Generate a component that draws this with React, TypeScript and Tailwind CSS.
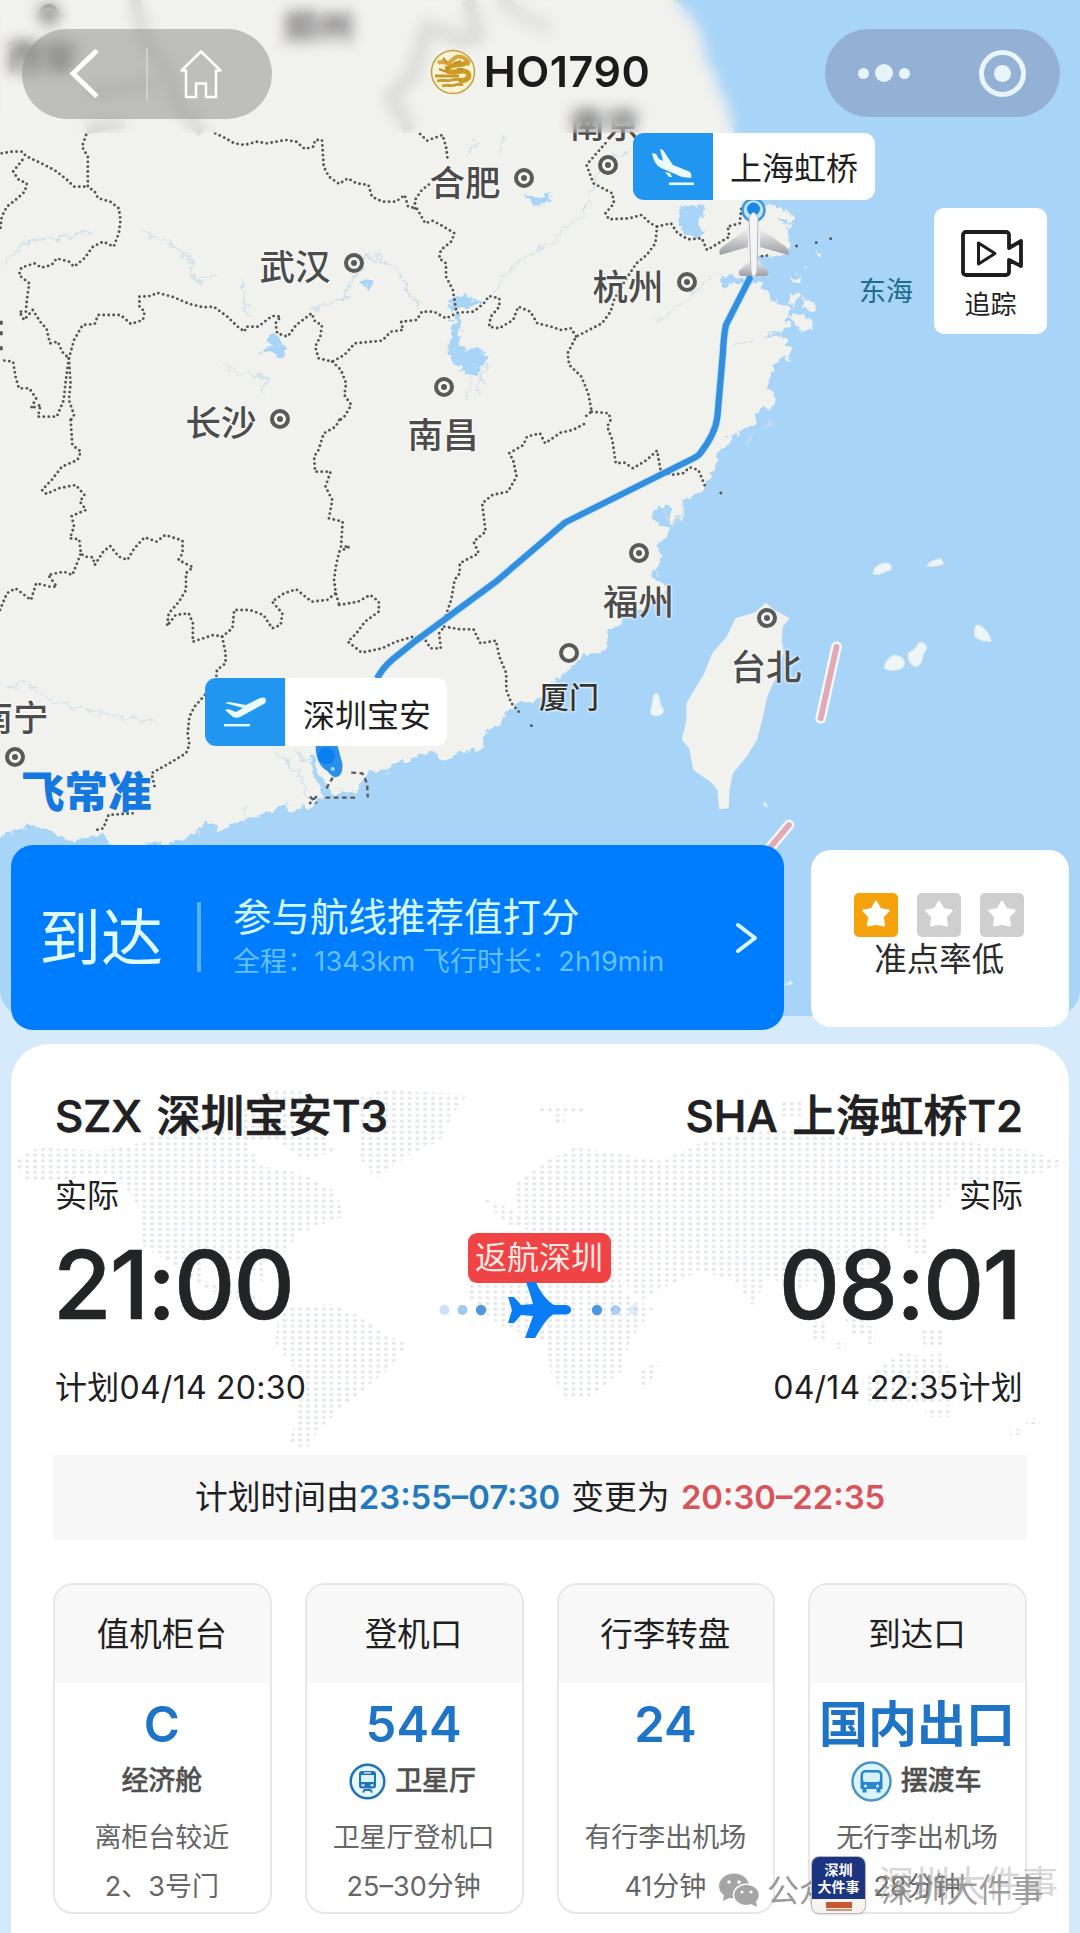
import clsx from 'clsx';

type City = {
  name: string;
  x: number;
  y: number;
  dot: [number, number];
  small?: boolean;
};

const cities: City[] = [
  { name: '西安', x: 42, y: 57, dot: [49, 14] },
  { name: '郑州', x: 318, y: 27, dot: [300, -30] },
  { name: '南京', x: 605, y: 125, dot: [608, 165] },
  { name: '合肥', x: 465, y: 183, dot: [524, 178] },
  { name: '武汉', x: 295, y: 267, dot: [354, 263] },
  { name: '长沙', x: 221, y: 423, dot: [279.5, 418.5] },
  { name: '南昌', x: 443, y: 435, dot: [444, 387] },
  { name: '杭州', x: 628, y: 287, dot: [687, 282] },
  { name: '福州', x: 638.5, y: 602, dot: [639, 553] },
  { name: '厦门', x: 569, y: 696.5, dot: [569, 653], small: true },
  { name: '台北', x: 766, y: 666.5, dot: [766.5, 618] },
  { name: '南宁', x: 13, y: 717.5, dot: [15, 757] },
];

type InfoCard = {
  title: string;
  value: string;
  tag?: string;
  icon?: 'train' | 'bus';
  lines: [string, string];
};

const infoCards: InfoCard[] = [
  { title: '值机柜台', value: 'C', tag: '经济舱', lines: ['离柜台较近', '2、3号门'] },
  { title: '登机口', value: '544', tag: '卫星厅', icon: 'train', lines: ['卫星厅登机口', '25–30分钟'] },
  { title: '行李转盘', value: '24', lines: ['有行李出机场', '41分钟'] },
  { title: '到达口', value: '国内出口', tag: '摆渡车', icon: 'bus', lines: ['无行李出机场', '28分钟'] },
];

// Province borders, upper half then lower half of the sheet
const bordersTop = [
  '5,460 35,455 65,455 75,468 95,478 130,495 165,515 195,540 215,560 250,560',
  '250,405 238,440 255,470 255,560 275,575 285,595 320,605 345,625 350,660 345,700 330,740 300,725 270,740 245,775 215,800 200,785 165,775 150,795 120,803 100,790 62,803 55,825 85,850 78,900 75,935 56,935 70,960 95,930 120,970 135,985 145,1030 168,1025 180,1055 200,1075',
  '65,480 38,515 55,540 78,550 72,575 45,600 20,620 5,650 0,695',
  '200,1075 190,1150 185,1200 165,1250 110,1250 118,1215 90,1225 105,1195 85,1165 55,1165 45,1130 38,1085 0,1080',
  '200,1075 205,1150 200,1200 215,1245 205,1262',
  '200,1075 215,1020 240,975 275,972 285,945 350,945 380,972 415,960 420,935 405,920 405,890 440,888 455,878 500,890 550,912 590,922 620,920 660,950 690,980 710,995 715,980 750,980 790,948 815,950 800,970 805,1000 835,1010 860,975 905,940 915,965 935,975 930,1010 915,1040 925,1075 965,1085 1000,1065 1030,1030 1110,1022 1135,995 1170,990 1165,965 1210,960 1225,935 1260,935 1295,955 1330,938 1375,935 1405,910 1420,888 1450,895 1450,920 1425,950 1420,980 1450,985 1490,960 1505,920 1540,935 1560,970 1600,980 1628,990 1658,985 1673,1010',
  '625,400 650,412 680,430 710,435 745,425 775,430 830,420 860,425 885,447 910,440 915,420 935,420 940,500 955,530 985,552 1010,535 1035,550 1070,555 1080,590 1110,605 1150,605 1175,585 1185,620 1210,625 1235,670 1255,662 1280,675 1320,700 1310,725 1280,750 1275,775 1295,790 1295,830 1315,870 1325,935',
  '1205,625 1205,600 1225,570 1250,550',
  '1220,402 1240,422 1285,405 1295,440 1300,480',
  '965,1085 990,1110 1005,1150 1000,1185 1020,1215 1000,1250 985,1262',
  '1758,430 1728,465 1703,495 1723,550 1778,580 1783,610 1758,640 1768,658 1828,655 1863,645 1888,670 1908,680 1903,730 1878,765 1848,790 1813,845 1783,900 1773,935 1748,970 1673,1010 1648,1060 1653,1095 1688,1130 1708,1180 1718,1235 1693,1255',
  '1718,1235 1768,1240 1773,1260 1763,1280 1778,1320 1788,1390 1813,1388 1838,1405 1878,1380 1908,1352 1918,1410 1948,1425 1983,1420 2003,1402 2028,1410 2048,1460',
  '1908,680 1948,670 1968,700 1998,718 2038,715 2053,750 2118,710 2113,680 2148,670 2153,620',
  '2198,770 2218,768 2240,765',
];

const bordersBottom = [
  '205,0 210,75 235,95 225,120 180,140 150,180 122,210 135,222 170,205 220,195 245,225 232,245 250,270 208,288 215,320 203,355 230,358 235,400 245,410 270,412 275,435 300,395 320,378 345,410 370,420 390,385 420,352 455,365 480,345 530,362 530,400 518,420 560,442 540,460 540,510 520,545 490,580 485,618 510,585 548,580 560,610 560,665 590,655 620,645 645,650',
  '985,0 975,20 940,40 925,90 912,110 915,155 960,155 945,200 965,240 955,295 995,305 990,380 1015,380 985,395 975,440 970,480 975,520 985,555',
  '0,570 20,520 45,505 90,540 105,490 145,500 165,500 140,465 185,455 210,465 235,400',
  '645,650 675,625 680,570 725,570 765,585 790,625 815,615 820,580 790,545 825,520 860,508 905,545 950,540 975,520',
  '985,555 1040,545 1075,525 1100,545 1100,575 1060,605 1035,640 1010,665 1050,698 1110,685 1150,665 1200,650 1235,660 1250,685 1280,685 1275,640 1290,620',
  '1290,620 1335,628 1375,628 1395,670 1440,662 1450,710 1470,760 1470,810 1485,850 1515,885',
  '1290,600 1310,540 1320,480 1335,460 1335,430 1390,400 1375,365 1410,335 1400,250 1430,225 1475,215 1500,170 1490,120 1478,100 1520,75 1530,50 1568,40 1583,70 1628,38 1663,30 1700,10',
  '645,650 655,700 655,730 630,750 628,770',
  '595,825 565,860 550,890 545,940 550,975 540,1000 495,1028 440,1060 450,1105',
  '385,1180 315,1185 300,1225 280,1230',
];

const route =
  'M2182,825 L2108,975 Q2101,1010 2099,1060 L2083,1250 Q2078,1300 2033,1360 Q2025,1370 2000,1382 L1640,1568 L1568,1632 L1440,1745 L1200,1928 L1140,1978 Q1112,2002 1095,2035';

function MapSheet() {
  return (
    <svg className="absolute inset-0 h-[1023px] w-full" viewBox="0 0 1080 1023" aria-hidden="true">
      <defs>
        <filter id="coast" x="-2%" y="-2%" width="104%" height="104%">
          <feTurbulence type="fractalNoise" baseFrequency="0.035" numOctaves="4" seed="7" />
          <feDisplacementMap in="SourceGraphic" scale="42" xChannelSelector="R" yChannelSelector="G" />
        </filter>
        <linearGradient id="wing" x1="0" y1="0" x2="0" y2="1">
          <stop offset="0" stopColor="#f4f4f6" />
          <stop offset="1" stopColor="#9b9da3" />
        </linearGradient>
      </defs>
      <rect width="1080" height="1023" fill="#a8d4f7" />

      <g transform="scale(.34439 .33333)">
        <g filter="url(#coast)" fill="#f1f1ee">
          {/* Mainland */}
          <path d="M-60,-60 H1958 L1965,0 L2028,80 L2058,200 L2098,280 L2128,370 L2140,470 L2200,590 L2250,640 L2285,690 L2292,745 L2260,765 L2205,768 L2190,800 L2150,835 L2088,820 L2105,860 L2150,850 L2205,845 L2240,890 L2262,910 L2295,925 L2285,985 L2215,1010 L2275,1000 L2298,1060 L2260,1085 L2228,1160 L2242,1215 L2200,1245 L2180,1275 L2120,1310 L2083,1360 L2068,1425 L2030,1475 L1990,1505 L1965,1520 L1903,1520 L1900,1560 L1945,1605 L1912,1625 L1918,1690 L1898,1735 L1945,1760 L1870,1825 L1808,1860 L1765,1895 L1755,1950 L1700,1960 L1668,2000 L1625,2035 L1590,2070 L1560,2100 L1510,2110 L1470,2130 L1450,2180 L1410,2185 L1405,2240 L1330,2262 L1290,2280 L1260,2250 L1170,2285 L1120,2310 L1060,2320 L1040,2375 L960,2380 L945,2350 L905,2260 L900,2300 L940,2390 L915,2410 L860,2435 L830,2410 L790,2435 L710,2460 L640,2490 L600,2462 L550,2510 L480,2535 L310,2540 L295,2495 L240,2520 L190,2525 L170,2500 L90,2475 L40,2500 L-60,2530 Z" />
          <path d="M2290,885 l25,-8 12,22 -30,14z M2330,895 l35,5 -6,38 -36,-8z M2295,940 l40,4 28,22 -22,26 -38,-12z" />
          <path d="M2225,610 l85,30 -10,30 -60,-30z M2255,655 l48,24 -10,10z" />
          <path d="M2300,830 h22 v14 h-22z M2330,800 h14 v10 h-14z M2372,755 h12 v14 h-12z M2270,1040 l40,10 -20,40z M2225,1170 l24,14 -12,40z" />
          <path d="M1950,1520 l40,-10 -12,52 -30,10z M1910,1590 l30,0 -8,26z M2115,1290 l50,-20 -20,45z" />
        </g>
        {/* Taiwan */}
        <path
          fill="#f1f1ee"
          d="M2223,1808 l25,22 45,25 -20,25 -3,45 6,30 -18,65 -30,70 -15,70 -15,60 -30,50 -40,50 -10,50 -2,55 -28,3 -5,-58 -20,-25 -50,-35 -12,-65 -21,-25 13,-60 0,-50 52,-90 23,-60 42,-50 25,-55 58,-18z"
        />
        <g fill="#eef5f6" stroke="#d6e8f0" strokeWidth="3">
          <path d="M2535,1722 q2,-30 38,-34 q20,4 14,22 q-22,6 -34,14z" />
          <path d="M2690,1698 q14,-18 34,-20 l8,-4 8,18 q-20,10 -50,6z" />
          <path d="M2567,2003 q6,-30 30,-38 q28,2 30,26 q-4,18 -28,20 q-24,2 -32,-8z M2637,1958 q16,-6 24,-16 q6,-20 18,-14 q22,10 2,34 q-4,34 -20,38 q-26,-4 -24,-42z" />
          <path d="M2830,1912 v-28 q4,-14 18,-6 q28,20 30,46 q-20,4 -46,-12z" />
          <path d="M1898,2085 q10,-12 16,6 l4,24 q18,20 0,30 q-22,8 -30,-8 q6,-24 10,-52z" />
          <path d="M2218,2406 l10,8 -2,8 -8,-8z M2278,2955 l18,-12 4,8z" />
        </g>
        {/* Lakes and rivers */}
        <g filter="url(#coast)" fill="#a8d4f7">
          <path d="M1310,900 l50,-15 45,20 -40,20 -55,10z M1322,950 h18 l-8,90 50,5 34,18 -24,62 -35,0 -45,-40 -12,-50z" />
          <path d="M790,1000 l35,10 0,60 -25,-5 -40,-15 25,-15z M1058,840 l25,10 -10,25 -18,-10z" />
          <path d="M1520,570 l40,25 50,-15 -15,25 -40,15z M1975,620 q40,-20 65,10 q-20,50 15,75 q-40,20 -75,-10 q-18,-40 -5,-75z" />
        </g>
        <g fill="none" stroke="#c6dce8" strokeWidth="5" strokeOpacity=".8" filter="url(#coast)">
          <path d="M10,800 L65,735 120,715 200,712 280,695 M400,695 450,710 500,735 545,775 575,845 630,825 M700,850 720,950 M900,930 L1000,890 1030,830 1060,770 1120,780 1170,840 1220,930" />
          <path d="M1440,880 L1460,820 1540,760 1600,730 1640,680 1700,640 1720,560 1760,470 1830,455 M780,1130 l-20,60 M640,1100 l150,40 M1360,460 l20,-35 M1445,460 l20,-50 M1910,960 l100,-70 60,-60" strokeWidth="4" />
          <path d="M10,2070 l60,-25 70,50 120,40 200,30 M1370,1130 l-20,70 M1410,1090 l-20,90" strokeWidth="4" />
          <path d="M800,2250 l60,60 40,80 M850,2240 l50,60 30,60 M710,2410 v60 M2130,1040 l60,-30" strokeWidth="5" />
          <path d="M1920,1530 l40,50 30,-70 M2200,1290 l-30,40 M2230,1260 l-10,30" strokeWidth="7" />
        </g>

        <g fill="none" stroke="#7a7a78" strokeOpacity=".3" strokeWidth="38" strokeLinejoin="round">
          <polyline points="390,-10 420,120 480,200 520,320 590,395" strokeOpacity=".2" />
          <polyline points="250,280 450,250" strokeOpacity=".2" />
          <polyline points="250,385 290,375 360,365" strokeOpacity=".2" />
          <polyline points="1190,390 1135,290 1200,220 1240,80 1340,120 1390,110 1360,0" strokeOpacity=".2" />
          <polyline points="1450,0 1520,50 1600,90" strokeOpacity=".15" />
        </g>
        <g fill="none" stroke="#555" strokeWidth="8.500" strokeLinecap="round" strokeDasharray="0 14.5">
          {bordersTop.map((points) => (
            <polyline key={points} points={points} />
          ))}
          <g transform="translate(0 1260)">
            {bordersBottom.map((points) => (
              <polyline key={points} points={points} />
            ))}
          </g>
          <path d="M2313,738 h1 M2370,728 h1 M2412,716 l14,-3 M2093,1479 h1 M1543,2177 h1" />
        </g>
        <path d="M0,968 h8 M0,1000 h8 M0,1045 h8" stroke="#555" strokeWidth="12" />
        <path
          d="M1020,2318 l32,2 14,30 2,42 M945,2393 h90 M948,2365 l18,-32 M900,2390 l20,20 M920,2388 l-22,24"
          fill="none"
          stroke="#5c5c5c"
          strokeWidth="7"
          strokeDasharray="14 10"
        />

        {/* Maritime dashes */}
        <g strokeLinecap="round" fill="none">
          <path d="M2429,1940 L2383,2155 M2291,2475 L2190,2600" stroke="#f4f8fb" strokeWidth="31" />
          <path d="M2429,1940 L2383,2155 M2291,2475 L2190,2600" stroke="#e2aab6" strokeWidth="17" />
        </g>

        {/* Flown route */}
        <path d={route} fill="none" stroke="#8fd8ff" strokeWidth="23" strokeOpacity=".6" />
        <path d={route} fill="none" stroke="#348ede" strokeWidth="18" />

        {/* Departure pin */}
        <path d="M917,2230 q-4,60 34,84 q14,18 24,18 q22,-4 19,-42 q-8,-30 -16,-60z" fill="#2a8fea" />
        <circle cx="948" cy="2268" r="25" fill="#0a80f0" />
        <circle cx="966" cy="2307" r="6" fill="#9fe0ff" />
      </g>

      {/* Arrival dot and aircraft */}
      <circle cx="753.5" cy="210" r="11" fill="#bfe6ff" stroke="#3d96e2" strokeWidth="2.5" />
      <circle cx="753.5" cy="209" r="6.5" fill="#1c86e6" />
      <path d="M748 228 L722 247 Q718 251 720 255 L748 247Z M760 228 L786 247 Q790 251 788 255 L760 247Z" fill="url(#wing)" />
      <path d="M750 260 L739 271 Q738 275 741 276 L766 276 Q770 274 768 271 L758 260Z" fill="url(#wing)" />
      <path d="M749 218 Q753.500 207 758 218 L757 272 L753.500 279 L751 272Z" fill="#f5f5f7" stroke="#b7b9bf" strokeWidth="1" />
    </svg>
  );
}

function CityMarker({ city }: { city: City }) {
  return (
    <>
      <span
        className="absolute flex h-[20px] w-[20px] -translate-x-1/2 -translate-y-1/2 items-center justify-center rounded-full border-[4px] border-[#5a5a5a] bg-[#f6f6f4]"
        style={{ left: city.dot[0], top: city.dot[1] }}
      >
        {!city.small && <i className="h-[6px] w-[6px] rounded-full bg-[#5a5a5a]" />}
      </span>
      <span
        className={clsx(
          'absolute -translate-x-1/2 -translate-y-1/2 font-medium whitespace-nowrap [text-shadow:0_0_3px_#fff,0_0_3px_#fff]',
          city.small ? 'text-[30px] leading-[30px] text-[#333]' : 'text-[35.500px] leading-[35px] text-[#4c4c4c]',
        )}
        style={{ left: city.x, top: city.y }}
      >
        {city.name}
      </span>
    </>
  );
}

function LandingIcon() {
  return (
    <svg className="h-[38px] w-[44px]" viewBox="0 0 44 38" fill="#eafaff">
      <path d="M9 1l3 1 10 15 15 6c3 1 4 4 3 7l-9-1L10 20C5 17 3 14 1 5l4 1 3 5 4 2z" />
      <path d="M14 24l5 1 2 4h-3z" />
      <rect x="18" y="34.500" width="25" height="2.600" />
    </svg>
  );
}

function TakeoffIcon() {
  return (
    <svg className="h-[32px] w-[44px]" viewBox="0 0 44 32" fill="#eafaff">
      <path d="M2 7l4-1 17 3L37 2c3-1 6-1 6 2 0 2-1 4-4 5L17 21c-2 1-5 1-7 0L2 14l3-1 8 3 7-4z" />
      <rect x="1" y="28" width="26" height="2.400" />
    </svg>
  );
}

function AirportTag({ name, landing }: { name: string; landing?: boolean }) {
  return (
    <div className="flex h-full w-[242px] overflow-hidden rounded-[11px] bg-white">
      <div className="flex w-[80px] items-center justify-center bg-[#2196f0]">
        {landing ? <LandingIcon /> : <TakeoffIcon />}
      </div>
      <div className={clsx('flex flex-1 items-center justify-center text-[32px] text-[#1f1f1f]', landing ? 'pt-[4px]' : 'pt-[8px] pl-[2px]')}>
        {name}
      </div>
    </div>
  );
}

function AirlineLogo() {
  return (
    <svg className="h-[46px] w-[46px]" viewBox="0 0 46 46" fill="none">
      <circle cx="23" cy="23" r="21.500" fill="#fbf3d6" stroke="#c2a040" strokeWidth="1.500" />
      <path d="M8 14c6-3 8 2 12-1s6-7 12-5c5 2 8 5 5 8" stroke="#d6a63c" strokeWidth="4" />
      <path d="M37 13c-4 4-11 2-16 4s-5 6 1 6 13-3 16 1-2 9-9 7" stroke="#cf9a24" strokeWidth="5" />
      <path d="M5 27h24M7 32c7-2 10 1 15-1s9 1 13-1M12 37c5-2 9 1 13-1s5 1 8-1" stroke="#c9982a" strokeWidth="2.800" />
      <path d="M9 20l8 3M13 9l4 5M24 14l7-2M15 18l5 2M27 20h6" stroke="#c08f24" strokeWidth="2.200" />
    </svg>
  );
}

function TopBar() {
  return (
    <header className="relative flex h-[133px] items-start justify-between px-[22px] pt-[29px] backdrop-blur-[7px]">
      <div className="flex h-[90px] w-[250px] items-center rounded-full bg-[#8c8c8a]/50">
        <svg className="ml-[46px] h-[52px] w-[34px]" viewBox="0 0 34 52" fill="none">
          <path d="M29 2.500L5 25.500L29 48.500" stroke="#fff" strokeWidth="5" />
        </svg>
        <i className="ml-[44px] h-[52px] w-[2px] bg-white/30" />
        <svg className="ml-[30px] h-[52px] w-[46px]" viewBox="0 0 46 52" fill="none">
          <path
            d="M23 3.500L3.500 22.500H8V49H18V35.500H28V49H38V22.500H42.500Z"
            stroke="#fff"
            strokeWidth="2.500"
            strokeLinejoin="round"
          />
        </svg>
      </div>
      <div className="mt-[20px] ml-[-17px] flex items-center gap-[8px]">
        <AirlineLogo />
        <h1 className="-mt-[3px] text-[43px] leading-[46px] font-semibold tracking-[0.500px] text-[#1c1a1a]">HO1790</h1>
      </div>
      <div className="mr-[-2px] flex h-[88px] w-[235px] items-center rounded-full bg-[#7f93b8]/55">
        <div className="ml-[33px] flex items-center gap-[6px]">
          <i className="h-[11px] w-[11px] rounded-full bg-[#e6f3fb]" />
          <i className="h-[18px] w-[18px] rounded-full bg-[#e6f3fb]" />
          <i className="h-[11px] w-[11px] rounded-full bg-[#e6f3fb]" />
        </div>
        <div className="ml-[69px] flex h-[47px] w-[47px] items-center justify-center rounded-full border-[5px] border-[#e9f5fd]">
          <i className="h-[17px] w-[17px] rounded-full bg-[#e9f5fd]" />
        </div>
      </div>
    </header>
  );
}

function FlightMap() {
  return (
    <section className="relative h-[1016px] overflow-hidden rounded-b-[26px]">
      <MapSheet />
      {cities.map((city) => (
        <CityMarker key={city.name} city={city} />
      ))}
      <span className="absolute top-[278px] left-[859px] text-[27px] leading-[27px] text-[#1d6c8c]">东海</span>
      <span className="absolute top-[770px] left-[21px] text-[43.500px] leading-[44px] font-black text-[#1478e0]">
        飞常准
      </span>
      <TopBar />
      <div className="absolute top-[133px] left-[633px] h-[67px]">
        <AirportTag name="上海虹桥" landing />
      </div>
      <div className="absolute top-[678px] left-[205px] h-[68px]">
        <AirportTag name="深圳宝安" />
      </div>
      <button className="absolute top-[208px] left-[934px] flex h-[126px] w-[113px] flex-col items-center rounded-[10px] bg-white pt-[22px]">
        <svg className="ml-[3px] h-[47px] w-[62px]" viewBox="0 0 62 47" fill="none" stroke="#1d1d1d" strokeWidth="3.800">
          <path
            d="M48 15V5a3 3 0 0 0-3-3H5a3 3 0 0 0-3 3V42a3 3 0 0 0 3 3H45a3 3 0 0 0 3-3V30L60 36V11L48 18Z"
            strokeLinejoin="round"
          />
          <path d="M17.500 13V34L34 23.500Z" strokeWidth="3" strokeLinejoin="round" />
        </svg>
        <span className="mt-[14px] text-[26px] leading-[28px] text-[#222]">追踪</span>
      </button>
    </section>
  );
}

function RatingStar({ active }: { active?: boolean }) {
  return (
    <span
      className={clsx('flex h-[43.500px] w-[44px] items-center justify-center rounded-[5px]', active ? 'bg-[#f5a20c]' : 'bg-[#cfcfcf]')}
    >
      <svg className="-mt-[1px] h-[32px] w-[32px]" viewBox="0 0 30 30">
        <path
          d="M15 3.500l3.800 6.900 7.900 1.400-5.500 5.800 1.100 8L15 23.900l-7.300 1.700 1.100-8-5.500-5.800 7.900-1.400z"
          fill="#fff"
          stroke="#fff"
          strokeWidth="2.200"
          strokeLinejoin="round"
        />
      </svg>
    </span>
  );
}

function StatusRow() {
  return (
    <div className="relative -mt-[171px] flex items-start justify-between px-[11px]">
      <div className="flex h-[184.500px] w-[772.500px] items-center rounded-[22px] bg-[#007dff] pl-[28px]">
        <span className="pt-[3px] text-[62px] leading-[64px] font-normal text-[#dffcff]">到达</span>
        <i className="ml-[34px] h-[70px] w-[4px] bg-[#55b0ff]" />
        <div className="ml-[32px] flex flex-col pt-[4px]">
          <span className="text-[38.500px] leading-[46px] text-[#d3fbff]">参与航线推荐值打分</span>
          <span className="text-[27px] leading-[44px] tracking-[0.100px] whitespace-nowrap text-[#66c0ff]">
            全程：1343km 飞行时长：2h19min
          </span>
        </div>
        <svg className="mt-[2px] mr-[25px] ml-auto h-[32px] w-[24px]" viewBox="0 0 24 32" fill="none">
          <path d="M3 3L20 16L3 29" stroke="#d8fbff" strokeWidth="4" strokeLinecap="round" strokeLinejoin="round" />
        </svg>
      </div>
      <div className="mt-[5px] flex h-[177px] w-[258.500px] flex-col items-center rounded-[20px] bg-white pt-[43px] pr-[1px]">
        <div className="flex gap-[19px]">
          <RatingStar active />
          <RatingStar />
          <RatingStar />
        </div>
        <span className="mt-[4px] text-[32.500px] leading-[38px] text-[#2b2b2b]">准点率低</span>
      </div>
    </div>
  );
}

function WorldDots() {
  return (
    <svg className="absolute top-0 left-0 h-[430px] w-[1058px]" viewBox="11 1043 1058 430" aria-hidden="true">
      <defs>
        <pattern id="dots" width="7.800" height="5.700" patternUnits="userSpaceOnUse">
          <ellipse cx="3.900" cy="2.850" rx="2.200" ry="1.600" fill="#e3e7ec" />
        </pattern>
      </defs>
      <g fill="url(#dots)">
        {/* Americas */}
        <path d="M14 1160L40 1145 100 1150 150 1140 245 1140 262 1165 300 1172 335 1190 345 1215 300 1232 285 1250 262 1262 268 1285 240 1262 205 1258 200 1278 225 1285 262 1298 255 1305 205 1288 170 1262 143 1245 140 1210 125 1185 105 1172 60 1180 25 1178Z" />
        <path d="M265 1090L310 1088 300 1105 335 1150 305 1160 275 1140 145 1138 200 1118 240 1108Z" />
        <path d="M355 1096L385 1089 468 1093 452 1115 440 1140 412 1152 375 1178 356 1152 362 1128Z" />
        <path d="M290 1305L330 1303 362 1316 382 1332 408 1342 392 1365 366 1387 340 1408 318 1430 305 1450 290 1440 300 1400 300 1375 275 1342 278 1318Z" />
        {/* Europe and Asia */}
        <path d="M480 1197L500 1202 520 1215 512 1185 545 1160 575 1146 618 1152 660 1160 700 1142 745 1132 800 1126 870 1138 960 1140 1030 1150 1068 1162 1040 1172 1005 1178 960 1182 935 1215 915 1238 890 1232 885 1265 830 1275 792 1292 770 1275 752 1305 735 1280 700 1270 668 1285 640 1300 615 1270 600 1240 555 1235 510 1225Z" />
        <path d="M540 1104h45v8h-20v10h-10v-10h-15zM780 1100h25v15h-25z" />
        {/* Africa, Oceania */}
        <path d="M490 1248L560 1240 610 1262 632 1300 655 1305 630 1340 622 1370 590 1398 566 1398 550 1370 546 1340 500 1325 465 1295 470 1268ZM642 1368l18-8-12 28-8-2z" />
        <path d="M862 1378L900 1352 925 1355 940 1352 956 1380 950 1405 900 1400 868 1404ZM925 1408h28v8h-28zM1026 1417h14v6h-14zM1010 1428h10v6h-10z" />
        <path d="M810 1320h15v18h-12zM832 1342h14v6h-14zM845 1318h20v16h-14zM862 1325h14v18h-8zM918 1330h24v14h-18zM900 1236h30v18h-14z" />
      </g>
    </svg>
  );
}

function TimeColumn({ code, airport, time, plan, right }: { code: string; airport: string; time: string; plan: string; right?: boolean }) {
  return (
    <div className={clsx('flex flex-col whitespace-nowrap text-[#202022]', right ? 'items-end' : 'items-start')}>
      <h2 className="text-[43.800px] leading-[44px] font-medium [word-spacing:3px] [-webkit-text-stroke:0.7px_#202022]">
        {code} {airport}
      </h2>
      <span className="mt-[37px] text-[32px] leading-[40px]">实际</span>
      <span
        className={clsx(
          'mt-[21px] text-[95px] leading-[96px] font-medium tracking-[-1.900px] text-[#222426] [-webkit-text-stroke:0.6px_#222426]',
          right ? 'mr-[3px]' : '-ml-[2px]',
        )}
      >
        {time}
      </span>
      <span className="mt-[35px] text-[32px] leading-[40px] tracking-[0.250px]">{plan}</span>
    </div>
  );
}

function FlightTrack() {
  return (
    <div className="flex flex-col items-center pt-[138px]">
      <span className="flex h-[50px] w-[143px] items-center justify-center rounded-[9px] bg-[#f04346] text-[32px] whitespace-nowrap text-[#ffe8e2]">
        返航深圳
      </span>
      <svg className="-mt-[1px] h-[56px] w-[200px]" viewBox="440 1281 200 56">
        <g fill="#2f86d8">
          <circle cx="445.500" cy="1309" r="5" opacity=".25" />
          <circle cx="463.500" cy="1309" r="5" opacity=".45" />
          <circle cx="482" cy="1309" r="5.200" opacity=".85" />
          <circle cx="598" cy="1309" r="5.200" opacity=".85" />
          <circle cx="616.500" cy="1309" r="5" opacity=".4" />
          <circle cx="634.500" cy="1309" r="5" opacity=".15" />
        </g>
        <path
          transform="translate(508 1281)"
          d="M19 0h10c3 8 10 18 18 23h11c4 0 6 2.500 6 5s-2 4.500-6 4.500H46C38 38 33 48 28 56H18c3-8 6-16 8-22l-12-1-7 8H1l4-13L1 15h6l7 8 12-1c-2-7-4-14-7-22z"
          fill="#0a7cf5"
        />
      </svg>
    </div>
  );
}

function TransitIcon({ kind }: { kind: 'train' | 'bus' }) {
  if (kind === 'train') {
    return (
      <svg className="-ml-[2px] h-[37px] w-[37px]" viewBox="0 0 37 37" fill="none">
        <circle cx="18.500" cy="18.500" r="16.800" fill="#e6f8ff" stroke="#1f72b4" strokeWidth="2.500" />
        <rect x="10" y="8" width="17" height="17.500" rx="3" fill="#2272b8" />
        <rect x="12" y="12" width="13" height="7" fill="#d8f3ff" />
        <rect x="15" y="9.200" width="7" height="1.300" fill="#d8f3ff" />
        <path d="M12.500 22.300h3M21.500 22.300h3" stroke="#d8f3ff" strokeWidth="2" />
        <path d="M14 29.500l1.500-2.500h6l1.500 2.500" stroke="#2272b8" strokeWidth="1.800" />
      </svg>
    );
  }
  return (
    <svg className="-ml-[2px] h-[41px] w-[41px]" viewBox="0 0 41 41" fill="none">
      <circle cx="20.500" cy="20.500" r="19" fill="#d9f4ff" stroke="#4b93c4" strokeWidth="2.500" />
      <path d="M9.500 14a5 5 0 0 1 5-5h12a5 5 0 0 1 5 5v14h-2v3.500h-4v-3.500h-10v3.500h-4v-3.500h-2z" fill="#2c86cc" />
      <rect x="12" y="11.500" width="17" height="9.500" rx="2.500" fill="#d3f2ff" />
      <circle cx="14.500" cy="25" r="1.500" fill="#d3f2ff" />
      <circle cx="26.500" cy="25" r="1.500" fill="#d3f2ff" />
    </svg>
  );
}

function InfoTile({ card }: { card: InfoCard }) {
  return (
    <div className="flex h-[331px] flex-col items-center overflow-hidden rounded-[20px] border-[2.500px] border-[#e7e7e7] bg-white pr-[1px] whitespace-nowrap">
      <div className="-mr-[1px] flex h-[99px] w-[215px] items-center justify-center bg-[#f8f8f8] pt-[2px] pr-[1px] text-[32.500px] leading-[40px] text-[#1f1f1f]">
        {card.title}
      </div>
      <span className="mt-[12px] text-[49px] leading-[60px] font-semibold text-[#1f74c6]">{card.value}</span>
      <div className="mt-[6px] flex h-[40px] items-center gap-[9px] text-[27px] font-medium text-[#4f4f4f] [-webkit-text-stroke:0.4px_#4f4f4f]">
        {card.icon && <TransitIcon kind={card.icon} />}
        {card.tag}
      </div>
      <p className="mt-[11.500px] text-center text-[27px] leading-[49.500px] text-[#666]">
        {card.lines[0]}
        <br />
        {card.lines[1]}
      </p>
    </div>
  );
}

function Watermark() {
  return (
    <div className="absolute top-[1856px] left-[719px] h-[62px] w-[350px] whitespace-nowrap">
      <svg className="absolute top-[17px] left-0 h-[34px] w-[42px]" viewBox="0 0 42 34">
        <ellipse cx="15" cy="13" rx="15" ry="12.500" fill="#a5a5a5" />
        <path d="M5 21l-1 7 8-4z" fill="#a5a5a5" />
        <ellipse cx="27.500" cy="22" rx="13" ry="10.800" fill="#a5a5a5" stroke="#fff" strokeWidth="1.500" />
        <path d="M32 31l6 3-1-6z" fill="#a5a5a5" />
        <g fill="#fff">
          <circle cx="10" cy="9" r="1.800" />
          <circle cx="20" cy="9" r="1.800" />
          <circle cx="23" cy="19" r="1.600" />
          <circle cx="32" cy="19" r="1.600" />
        </g>
      </svg>
      <span className="absolute top-[17px] left-[48px] text-[32px] leading-[36px] text-[#8c8c8c]/90">公众号</span>
      <span className="absolute top-[10px] left-[159px] text-[36px] leading-[36px] text-[#b0b0b0]/50">深圳大件事</span>
      <span className="absolute top-[17px] left-[153px] text-[32.500px] leading-[36px] text-[#8c8c8c]/85">
        <span className="inline-block w-[9px] tracking-[-4px]">·</span>深圳大件事
      </span>
      <div className="absolute top-0 left-[92px] flex h-[58px] w-[55px] flex-col items-center overflow-hidden rounded-[8px] border border-[#b9b9b9] bg-[#f6f3f0] shadow-sm">
        <div className="flex h-[42px] w-full flex-col items-center justify-center bg-[#1d3580] text-[14px] leading-[17px] font-bold text-white">
          <span>深圳</span>
          <span>大件事</span>
        </div>
        <i className="mt-[3px] h-[6px] w-[26px] bg-[#c8562f]" />
        <i className="mt-px h-[2px] w-[26px] bg-[#d9927a]" />
      </div>
    </div>
  );
}

export default function App() {
  return (
    <div className="relative h-[1933px] w-[1080px] overflow-hidden bg-gradient-to-b from-[#d9ecfc] to-[#d2e8fb] font-[Inter,'Noto_Sans_CJK_SC',sans-serif]">
      <FlightMap />
      <StatusRow />
      <main className="relative mx-[11px] mt-[14px] h-[890px] rounded-t-[38px] bg-white pt-[51px]">
        <WorldDots />
        <div className="relative grid grid-cols-[1fr_200px_1fr] pr-[46px] pl-[44px]">
          <TimeColumn code="SZX" airport="深圳宝安T3" time="21:00" plan="计划04/14 20:30" />
          <FlightTrack />
          <TimeColumn code="SHA" airport="上海虹桥T2" time="08:01" plan="04/14 22:35计划" right />
        </div>
        <div className="relative mx-[42px] mt-[47px] flex h-[85px] items-center justify-center bg-[#f7f7f7] pt-[2px] text-[32.800px] whitespace-pre text-[#1f1f1f] [word-spacing:2px]">
          计划时间由<b className="font-semibold text-[#2279bd]">23:55–07:30</b> 变更为{' '}
          <b className="font-semibold text-[#d9545a]">20:30–22:35</b>
        </div>
        <div className="mx-[42px] mt-[43px] grid grid-cols-4 gap-[33px]">
          {infoCards.map((card) => (
            <InfoTile key={card.title} card={card} />
          ))}
        </div>
      </main>
      <Watermark />
    </div>
  );
}
